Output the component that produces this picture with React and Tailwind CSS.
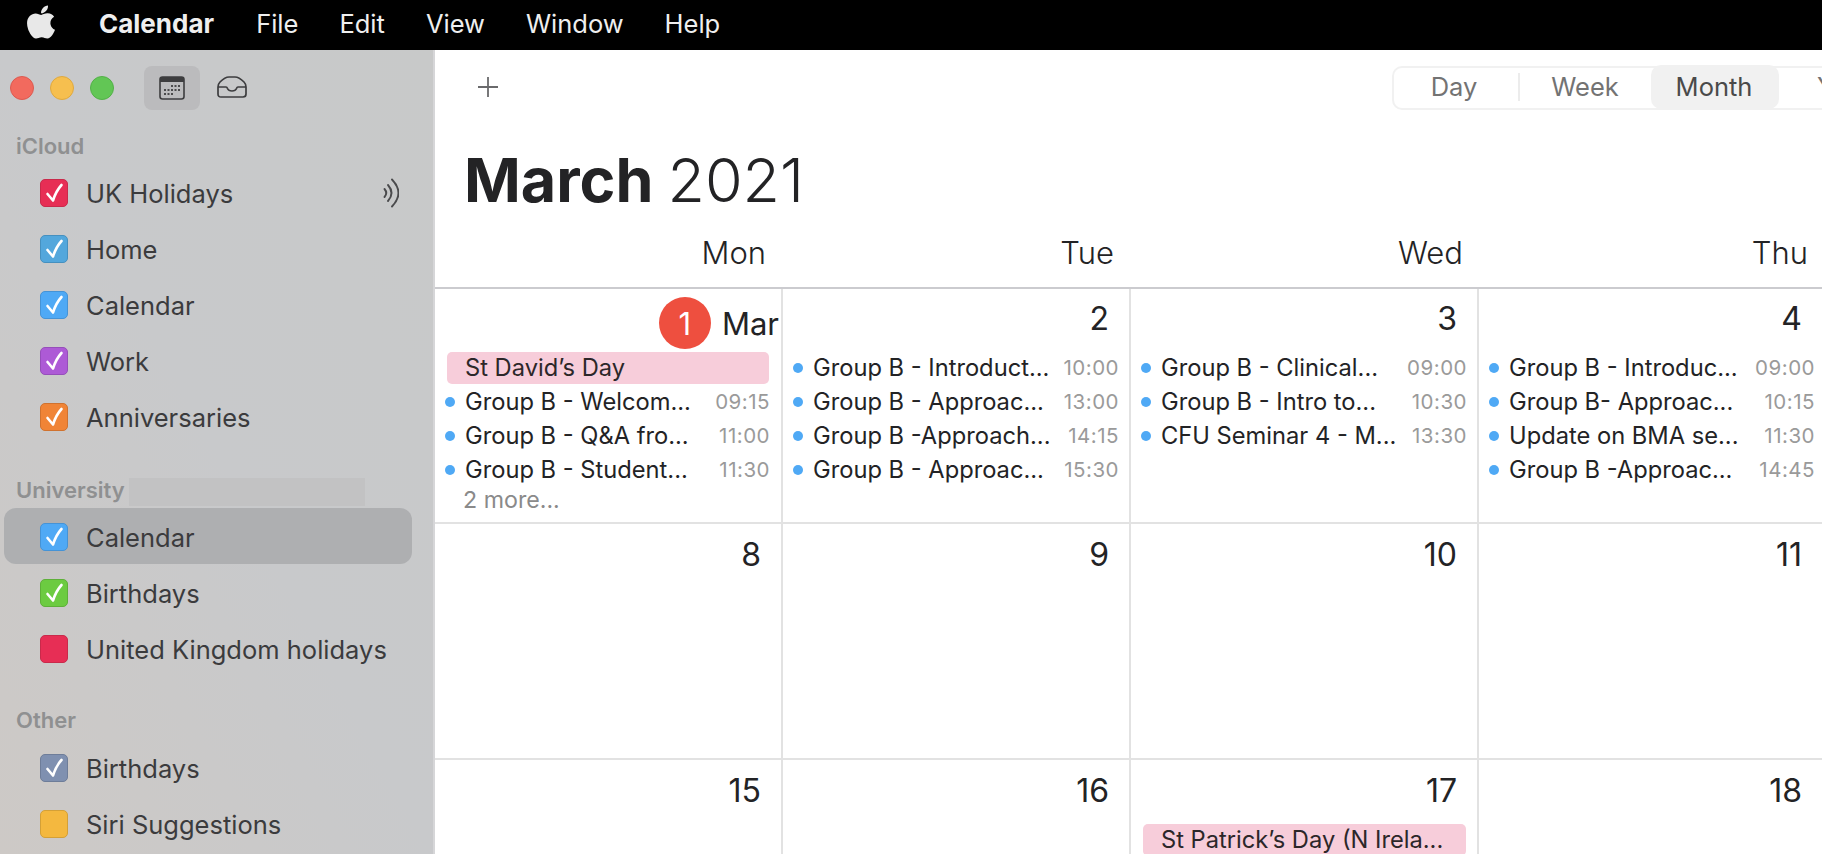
import React from 'react'
import { FaApple } from 'react-icons/fa'

const menus = ['File', 'Edit', 'View', 'Window', 'Help']

const Check = () => (
    <svg viewBox="0 0 28 28" className="w-7 h-7">
        <path d="M7.5 15 L13 21.5 Q16 12 21.5 6" fill="none" stroke="white" strokeWidth="2.6" strokeLinecap="round" strokeLinejoin="round" />
    </svg>
)

const CalendarRow = ({ name, box, border, checked = true, selected = false, live = false }) => (
    <div className="h-14 relative flex items-center pl-10 pr-[34px]">
        {selected && <div className="absolute left-1 right-[21px] -top-px bottom-px rounded-xl bg-[#aeafb1]"></div>}
        <div className={`relative w-7 h-7 rounded-[5px] border ${box} ${border}`}>
            {checked && <div className="-m-px"><Check /></div>}
        </div>
        <span className="relative ml-[18px] mt-[2px] text-[25.5px] text-[#3b3b3d] leading-none">{name}</span>
        {live && (
            <svg viewBox="0 0 16 30" className="relative ml-auto w-4 h-[30px]" fill="none" stroke="#4a4a4c" strokeLinecap="round">
                <path d="M1.500 11 Q5 15 1.500 19" strokeWidth="1.9" />
                <path d="M5 7 Q12 15 5 23" strokeWidth="1.9" />
                <path d="M9 1.500 Q22 15 9 28.500" strokeWidth="1.9" />
            </svg>
        )}
    </div>
)

const Event = ({ title, time }) => (
    <div className="h-[34px] flex items-center">
        <div className="w-[10px] h-[10px] rounded-full bg-[#4fa9f5] shrink-0"></div>
        <span className="ml-[10px] flex-1 text-[23.7px] text-[#232325] whitespace-nowrap leading-none">{title}</span>
        <span className="text-[20.5px] text-[#9a9a9a] tracking-[0.5px] leading-none">{time}</span>
    </div>
)

const AllDay = ({ title }) => (
    <div className="h-8 mb-px rounded-[5px] bg-[#f7cdda] flex items-center pl-[18px] text-[23.7px] text-[#2c2729] whitespace-nowrap leading-none">
        {title}
    </div>
)

const DayNum = ({ n, pr = 'pr-[20px]' }) => (
    <div className={`h-[42px] flex justify-end items-center ${pr} text-[32px] text-[#232325] leading-none`}>{n}</div>
)

const weekOne = [
    [['Group B - Introduct...', '10:00'], ['Group B - Approac...', '13:00'], ['Group B -Approach...', '14:15'], ['Group B - Approac...', '15:30']],
    [['Group B - Clinical...', '09:00'], ['Group B - Intro to...', '10:30'], ['CFU Seminar 4 - M...', '13:30']],
    [['Group B - Introduc...', '09:00'], ['Group B- Approac...', '10:15'], ['Update on BMA se...', '11:30'], ['Group B -Approac...', '14:45']],
]

export default function App() {
    return (
        <div className="h-screen flex flex-col overflow-hidden bg-white font-['Inter',sans-serif]">
            {/* Menu bar */}
            <div className="h-[50px] shrink-0 bg-black flex items-center pl-[24px] pb-[2px] text-[#efefef] leading-none">
                <FaApple className="w-[34px] h-[38px] text-[#e8e8e8] -mt-[4px]" />
                <span className="ml-[41px] text-[26px] font-bold">Calendar</span>
                <div className="flex gap-[41px] ml-[42px] text-[25.5px]">
                    {menus.map((m) => <span key={m}>{m}</span>)}
                </div>
            </div>

            <div className="flex-1 flex min-h-0">
                {/* Sidebar */}
                <div className="w-[435px] shrink-0 border-r-2 border-[#d6d6d8] bg-gradient-to-tr from-[#cdc9c6] via-[#c8c9cb] to-[#c8c9c9]">
                    <div className="h-[60px] mt-2 flex items-center">
                        <div className="w-6 h-6 ml-[10px] rounded-full bg-[#f26a5e] border border-[#dc5a50]"></div>
                        <div className="w-6 h-6 ml-4 rounded-full bg-[#f6bf4f] border border-[#dfa93f]"></div>
                        <div className="w-6 h-6 ml-4 rounded-full bg-[#62c655] border border-[#53b148]"></div>
                        <div className="w-14 h-11 ml-[30px] rounded-lg bg-[#bbbbbd] flex items-center justify-center">
                            <svg viewBox="0 0 26 24" className="w-[26px] h-6">
                                <rect x="1" y="1" width="24" height="22" rx="2.5" fill="none" stroke="#3d3d3f" strokeWidth="1.6" />
                                <path d="M1 3.5 Q1 1 3.5 1 H22.5 Q25 1 25 3.5 V6 H1 Z" fill="#3d3d3f" />
                                {[[12,9],[15.5,9],[19,9],[5,13],[8.5,13],[12,13],[15.5,13],[19,13],[5,17],[8.5,17],[12,17]].map(([x, y]) => (
                                    <rect key={`${x}-${y}`} x={x} y={y} width="2" height="2" fill="#4a4a4c" />
                                ))}
                            </svg>
                        </div>
                        <svg viewBox="0 0 30 22" className="w-[30px] h-[22px] ml-[17px] -mt-[2px]" fill="none" stroke="#3d3d3f" strokeWidth="1.7" strokeLinejoin="round">
                            <path d="M1 11 Q1 8 3 6 Q8 1 12 1 H18 Q22 1 27 6 Q29 8 29 11 V18 Q29 21 26 21 H4 Q1 21 1 18 Z" />
                            <path d="M1 11 H9 Q10 11 10.5 12.5 Q11.5 15 15 15 Q18.500 15 19.500 12.500 Q20 11 21 11 H29" />
                        </svg>
                    </div>

                    <div className="h-7 mt-[14px] pl-4 flex items-center text-[22px] font-semibold text-[#8f9091] leading-none">iCloud</div>
                    <div className="mt-[5px]">
                        <CalendarRow name="UK Holidays" box="bg-[#e72e55]" border="border-[#c92a4b]" live />
                        <CalendarRow name="Home" box="bg-[#53a7dc]" border="border-[#4690bf]" />
                        <CalendarRow name="Calendar" box="bg-[#4fa9f5]" border="border-[#4593d6]" />
                        <CalendarRow name="Work" box="bg-[#ad5ad6]" border="border-[#964eba]" />
                        <CalendarRow name="Anniversaries" box="bg-[#f08436]" border="border-[#d0722f]" />
                    </div>

                    <div className="h-7 mt-[31px] pl-4 flex items-center text-[22px] font-semibold text-[#8f9091] leading-none">
                        University
                        <div className="ml-1 mt-1 w-[236px] h-7 bg-[#c2c2c3]"></div>
                    </div>
                    <div className="mt-[5px]">
                        <CalendarRow name="Calendar" box="bg-[#4fa9f5]" border="border-[#4593d6]" selected />
                        <CalendarRow name="Birthdays" box="bg-[#6ccb41]" border="border-[#5eb039]" />
                        <CalendarRow name="United Kingdom holidays" box="bg-[#e72e55]" border="border-[#c92a4b]" checked={false} />
                    </div>

                    <div className="h-7 mt-[29px] pl-4 flex items-center text-[22px] font-semibold text-[#8f9091] leading-none">Other</div>
                    <div className="mt-[6px]">
                        <CalendarRow name="Birthdays" box="bg-[#7f90b0]" border="border-[#6e7d99]" />
                        <CalendarRow name="Siri Suggestions" box="bg-[#f4b83f]" border="border-[#d4a037]" checked={false} />
                    </div>
                </div>

                {/* Calendar */}
                <div className="flex-1 min-w-0 overflow-hidden">
                    <div className="h-[59px] flex items-start">
                        <svg viewBox="0 0 22 22" className="w-[22px] h-[22px] ml-[42px] mt-[26px]" stroke="#6a6a6c" strokeWidth="1.8" fill="none">
                            <path d="M11 1 V21 M1 11 H21" />
                        </svg>
                        <div className="ml-auto mt-4 w-[430px] h-[44px] pb-[2px] border-2 border-r-0 border-[#f1f1f1] rounded-l-[10px] flex items-center text-[25.5px] text-[#737373] leading-none">
                            <div className="w-[124px] pr-[4px] shrink-0 text-center">Day</div>
                            <div className="w-[2px] h-7 shrink-0 bg-[#ececec]"></div>
                            <div className="w-[131px] pr-[1px] shrink-0 text-center">Week</div>
                            <div className="w-[128px] h-[44px] pr-[2px] shrink-0 rounded-[10px] bg-[#f1f1f1] flex items-center justify-center text-[#4a4a4a]">Month</div>
                            <div className="ml-[38px] shrink-0">Y</div>
                        </div>
                    </div>
                    <div className="h-[126px] pl-[29px] pt-[41px] text-[61px] text-[#232325] leading-none">
                        <span className="font-bold">March</span><span className="font-light ml-[14px]">2021</span>
                    </div>
                    <div className="grid grid-cols-[348px_348px_348px_348px] h-[54px] border-b-2 border-[#cbcbcf] text-[31px] font-light text-[#232325] leading-none">
                        <div className="flex justify-end items-center pr-[17px] pb-[17px]">Mon</div>
                        <div className="flex justify-end items-center pr-[17px] pb-[17px]">Tue</div>
                        <div className="flex justify-end items-center pr-[16px] pb-[17px]">Wed</div>
                        <div className="flex justify-end items-center pr-[19px] pb-[17px]">Thu</div>
                    </div>

                    <div className="grid grid-cols-[348px_348px_348px_348px] grid-rows-[235px_236px_236px]">
                        {/* Week of 1 March */}
                        <div className="border-r-2 border-b-2 border-[#e2e2e2] pt-2">
                            <div className="flex justify-end items-center h-[52px] pr-[2px]">
                                <div className="w-[52px] h-[52px] rounded-full bg-[#ee4f3f] text-white text-[31px] flex items-center justify-center leading-none">1</div>
                                <span className="ml-[11px] text-[31px] text-[#232325] leading-none">Mar</span>
                            </div>
                            <div className="ml-[12px] mr-[12px] mt-[3px]"><AllDay title="St David’s Day" /></div>
                            <div className="ml-[10px] mr-[11px]">
                                <Event title="Group B - Welcom..." time="09:15" />
                                <Event title="Group B - Q&A fro..." time="11:00" />
                                <Event title="Group B - Student..." time="11:30" />
                                <div className="pl-[18px] text-[23.2px] text-[#8a8a8a] leading-none mt-[2px]">2 more...</div>
                            </div>
                        </div>
                        {weekOne.map((events, i) => (
                            <div key={i} className="border-r-2 border-b-2 border-[#e2e2e2] pt-[9px]">
                                <DayNum n={i + 2} pr={i === 2 ? 'pr-[23px]' : 'pr-[20px]'} />
                                <div className="mt-[11px] pl-[10px] pr-[10px]">
                                    {events.map(([title, time]) => <Event key={title} title={title} time={time} />)}
                                </div>
                            </div>
                        ))}

                        {/* Week of 8 March */}
                        {[8, 9, 10, 11].map((n) => (
                            <div key={n} className="border-r-2 border-b-2 border-[#e2e2e2] pt-[10px]">
                                <DayNum n={n} pr={n === 11 ? 'pr-[23px]' : 'pr-[20px]'} />
                            </div>
                        ))}

                        {/* Week of 15 March */}
                        {[15, 16, 17, 18].map((n) => (
                            <div key={n} className="border-r-2 border-[#e2e2e2] pt-[10px]">
                                <DayNum n={n} pr={n === 18 ? 'pr-[23px]' : 'pr-[20px]'} />
                                {n === 17 && <div className="ml-[12px] mr-[11px] mt-[12px]"><AllDay title="St Patrick’s Day (N Irela..." /></div>}
                            </div>
                        ))}
                    </div>
                </div>
            </div>
        </div>
    )
}
